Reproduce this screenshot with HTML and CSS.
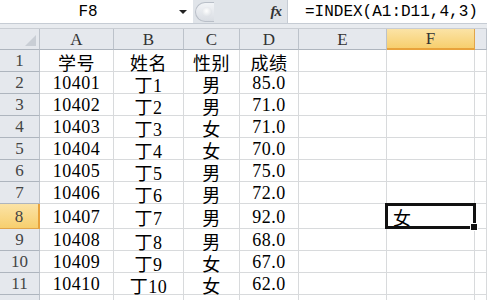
FILE: index.html
```html
<!DOCTYPE html>
<html>
<head>
<meta charset="utf-8">
<link rel="stylesheet" href="styles.css">
</head>
<body>
<div class="app">
  <div class="fbar">
    <div class="namebox"><span class="name">F8</span><span class="arrow"></span></div>
    <div class="mid">
      <span class="knob"><span class="knob-in"></span></span>
      <span class="fx">fx</span>
    </div>
    <div class="formula">=INDEX(A1:D11,4,3)</div>
  </div>
  <div class="gap"></div>
  <div class="sheet">
    <div class="c h corner"><span class="tri"></span></div>
    <div class="c h">A</div><div class="c h">B</div><div class="c h">C</div><div class="c h">D</div><div class="c h">E</div><div class="c h hsel-col">F</div><div class="c h"></div>

    <div class="c h rh">1</div><div class="c">学号</div><div class="c">姓名</div><div class="c">性别</div><div class="c">成绩</div><div class="c"></div><div class="c fcol"></div><div class="c"></div>
    <div class="c h rh">2</div><div class="c">10401</div><div class="c">丁1</div><div class="c">男</div><div class="c">85.0</div><div class="c"></div><div class="c fcol"></div><div class="c"></div>
    <div class="c h rh">3</div><div class="c">10402</div><div class="c">丁2</div><div class="c">男</div><div class="c">71.0</div><div class="c"></div><div class="c fcol"></div><div class="c"></div>
    <div class="c h rh">4</div><div class="c">10403</div><div class="c">丁3</div><div class="c">女</div><div class="c">71.0</div><div class="c"></div><div class="c fcol"></div><div class="c"></div>
    <div class="c h rh">5</div><div class="c">10404</div><div class="c">丁4</div><div class="c">女</div><div class="c">70.0</div><div class="c"></div><div class="c fcol"></div><div class="c"></div>
    <div class="c h rh">6</div><div class="c">10405</div><div class="c">丁5</div><div class="c">男</div><div class="c">75.0</div><div class="c"></div><div class="c fcol"></div><div class="c"></div>
    <div class="c h rh">7</div><div class="c">10406</div><div class="c">丁6</div><div class="c">男</div><div class="c">72.0</div><div class="c"></div><div class="c fcol"></div><div class="c"></div>
    <div class="c h rh hsel-row">8</div><div class="c">10407</div><div class="c">丁7</div><div class="c">男</div><div class="c">92.0</div><div class="c"></div><div class="c fcol active">女<span class="handle"></span></div><div class="c"></div>
    <div class="c h rh">9</div><div class="c">10408</div><div class="c">丁8</div><div class="c">男</div><div class="c">68.0</div><div class="c"></div><div class="c fcol"></div><div class="c"></div>
    <div class="c h rh">10</div><div class="c">10409</div><div class="c">丁9</div><div class="c">女</div><div class="c">67.0</div><div class="c"></div><div class="c fcol"></div><div class="c"></div>
    <div class="c h rh">11</div><div class="c">10410</div><div class="c">丁10</div><div class="c">女</div><div class="c">62.0</div><div class="c"></div><div class="c fcol"></div><div class="c"></div>
    <div class="c h rh"></div><div class="c"></div><div class="c"></div><div class="c"></div><div class="c"></div><div class="c"></div><div class="c fcol"></div><div class="c"></div>
  </div>
</div>
</body>
</html>
```

FILE: styles.css
```css
html, body {
  margin: 0;
  padding: 0;
  background: #ffffff;
}
body {
  width: 487px;
  height: 300px;
  overflow: hidden;
  font-family: "Liberation Serif", "Noto Sans CJK SC", serif;
  font-size: 18px;
  color: #000;
}
.app {
  display: flex;
  flex-direction: column;
}
.fbar {
  display: flex;
  height: 24px;
  box-sizing: border-box;
  border-bottom: 1px solid #c6ccd4;
  background: #fff;
  font-family: "Liberation Mono", monospace;
  font-size: 16px;
}
.namebox {
  width: 193px;
  display: flex;
  align-items: center;
  background: #fff;
}
.name {
  width: 176px;
  text-align: center;
  padding-top: 1px;
}
.arrow {
  width: 0;
  height: 0;
  border-left: 4px solid transparent;
  border-right: 4px solid transparent;
  border-top: 4px solid #222;
  margin-left: 3px;
}
.mid {
  width: 95px;
  background: #e0e4e9;
  display: flex;
  align-items: center;
  justify-content: space-between;
  padding: 0 6px 0 2px;
  box-sizing: border-box;
  border-right: 1px solid #c6ccd4;
}
.knob {
  width: 19px;
  height: 20px;
  border-radius: 10px 0 0 10px;
  border: 1px solid #b9bfc8;
  border-right: none;
  background: linear-gradient(#f2f4f7, #d9dde3);
  display: flex;
  align-items: center;
  justify-content: center;
  box-sizing: border-box;
}
.knob-in {
  width: 10px;
  height: 10px;
  border-radius: 50%;
  background: radial-gradient(circle at 45% 40%, #ffffff, #d0d5dc);
  margin-left: 3px;
}
.fx {
  font-family: "Liberation Serif", serif;
  font-style: italic;
  font-weight: bold;
  font-size: 15px;
  color: #333;
  letter-spacing: -1px;
}
.formula {
  flex: 1;
  padding-left: 17px;
  display: flex;
  align-items: center;
  padding-top: 1px;
  white-space: nowrap;
}
.gap {
  height: 5px;
  background: #e8ebef;
  border-bottom: 1px solid #c9cdd3;
  box-sizing: border-box;
}
.sheet {
  display: grid;
  grid-template-columns: 40px 74px 70px 56px 59px 88px 88px 12px;
  grid-template-rows: 21px repeat(7, 22px) 25px repeat(3, 22px) 10px;
}
.c {
  box-sizing: border-box;
  border-right: 1px solid #d8dadc;
  border-bottom: 1px solid #d8dadc;
  display: flex;
  align-items: center;
  justify-content: center;
  padding-top: 2px;
  white-space: nowrap;
  position: relative;
  letter-spacing: 0.5px;
}
.h {
  background: #e5e8ed;
  border-right-color: #bcc2ca;
  border-bottom-color: #aeb5be;
  color: #333;
  padding-top: 1px;
  font-size: 17px;
  letter-spacing: 0;
}
.rh {
  color: #444;
}
.corner {
  justify-content: flex-end;
  align-items: flex-end;
  padding: 0 3px 3px 0;
}
.tri {
  width: 0;
  height: 0;
  border-left: 11px solid transparent;
  border-bottom: 11px solid #c9ced5;
}
.hsel-col {
  background: linear-gradient(#fbe3a6, #f7cf6e);
  border-bottom: 2px solid #e8a23b;
  border-right-color: #e1a54a;
}
.hsel-row {
  background: linear-gradient(#fbe3a6, #f7cf6e);
  border-right: 2px solid #e8a23b;
  border-bottom-color: #e1a54a;
}
.active {
  justify-content: flex-start;
  padding-left: 6px;
}
.active::after {
  content: "";
  position: absolute;
  left: -2px;
  top: -1px;
  right: -2px;
  bottom: -1px;
  border: 3px solid #111;
  pointer-events: none;
}
.handle {
  position: absolute;
  right: -4px;
  bottom: -3px;
  width: 6px;
  height: 6px;
  background: #111;
  border: 1px solid #fff;
  z-index: 2;
}
```
